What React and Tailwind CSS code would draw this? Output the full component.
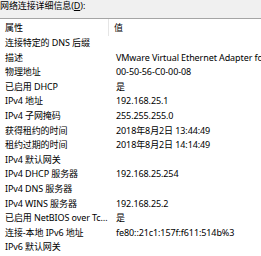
import React from 'react';

const rows = [
  ['连接特定的 DNS 后缀', ''],
  ['描述', 'VMware Virtual Ethernet Adapter for VMnet8'],
  ['物理地址', '00-50-56-C0-00-08'],
  ['已启用 DHCP', '是'],
  ['IPv4 地址', '192.168.25.1'],
  ['IPv4 子网掩码', '255.255.255.0'],
  ['获得租约的时间', '2018年8月2日 13:44:49'],
  ['租约过期的时间', '2018年8月2日 14:14:49'],
  ['IPv4 默认网关', ''],
  ['IPv4 DHCP 服务器', '192.168.25.254'],
  ['IPv4 DNS 服务器', ''],
  ['IPv4 WINS 服务器', '192.168.25.2'],
  ['已启用 NetBIOS over Tcpip', '是'],
  ['连接-本地 IPv6 地址', 'fe80::21c1:157f:f611:514b%3'],
  ['IPv6 默认网关', ''],
];

export default function App() {
  return (
    <div
      className="w-[261px] h-[256px] overflow-hidden bg-white text-[9px] text-black tracking-[-0.1px]"
      style={{ fontFamily: '"Noto Sans", "Noto Sans CJK SC", sans-serif' }}
    >
      {/* Dialog label */}
      <div className="h-[18px] bg-[#f0f0f0] leading-[11px]">
        网络连接详细信息(<span className="underline">D</span>):
      </div>

      {/* List view */}
      <div className="border-t border-[#a5a5a5] bg-white">
        {/* Header */}
        <div className="flex h-[16.5px] items-center">
          <div className="w-[109px] shrink-0 pl-[5px] border-r border-[#e5e5e5] h-full flex items-center">属性</div>
          <div className="pl-[5px]">值</div>
        </div>

        {rows.map(([label, value], i) => (
          <div key={i} className="flex h-[14.6px] items-center">
            <div className="w-[109px] shrink-0 pl-[5px] pr-[1px] truncate whitespace-nowrap">{label}</div>
            <div className="pl-[7px] whitespace-nowrap">{value}</div>
          </div>
        ))}
      </div>
    </div>
  );
}
